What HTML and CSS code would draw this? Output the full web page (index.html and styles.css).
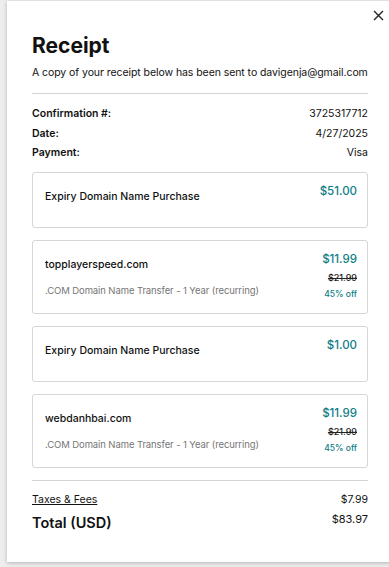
FILE: index.html
```html
<html lang="en">
<head>
  <meta charset="UTF-8" />
  <meta name="viewport" content="width=device-width, initial-scale=1.0"/>
  <title>Receipt</title>
  <link rel="stylesheet" href="styles.css">
</head>
<body>
  <div class="modal">
    <button type="button" class="close-btn" aria-label="Close">
      <svg width="11" height="11" viewBox="0 0 11 11"><path d="M1 1L10 10M10 1L1 10" stroke="#222" stroke-width="1.4" fill="none"/></svg>
    </button>

    <h1 class="title">Receipt</h1>
    <p class="subtitle">A copy of your receipt below has been sent to davigenja@gmail.com</p>

    <div class="divider"></div>

    <div class="info">
      <div class="info-row"><span class="info-label">Confirmation #:</span><span>3725317712</span></div>
      <div class="info-row"><span class="info-label">Date:</span><span>4/27/2025</span></div>
      <div class="info-row"><span class="info-label">Payment:</span><span>Visa</span></div>
    </div>

    <!-- line items -->
    <div class="item short">
      <div class="item-left">
        <div class="item-name">Expiry Domain Name Purchase</div>
      </div>
      <div class="item-right">
        <div class="price">$51.00</div>
      </div>
    </div>

    <div class="item">
      <div class="item-left">
        <div class="item-name">topplayerspeed.com</div>
        <div class="item-desc">.COM Domain Name Transfer - 1 Year (recurring)</div>
      </div>
      <div class="item-right">
        <div class="price">$11.99</div>
        <div class="old-price">$21.99</div>
        <div class="discount">45% off</div>
      </div>
    </div>

    <div class="item short">
      <div class="item-left">
        <div class="item-name">Expiry Domain Name Purchase</div>
      </div>
      <div class="item-right">
        <div class="price">$1.00</div>
      </div>
    </div>

    <div class="item">
      <div class="item-left">
        <div class="item-name">webdanhbai.com</div>
        <div class="item-desc">.COM Domain Name Transfer - 1 Year (recurring)</div>
      </div>
      <div class="item-right">
        <div class="price">$11.99</div>
        <div class="old-price">$21.99</div>
        <div class="discount">45% off</div>
      </div>
    </div>

    <div class="divider bottom"></div>

    <div class="summary-row">
      <a href="#" class="taxes-link">Taxes &amp; Fees</a>
      <span>$7.99</span>
    </div>
    <div class="summary-row total">
      <span class="total-label">Total (USD)</span>
      <span class="total-value">$83.97</span>
    </div>
  </div>
</body>
</html>
```

FILE: styles.css
```css
html, body {
  height: 100%;
}

body {
  font-family: 'Inter', 'Roboto', sans-serif;
  margin: 0;
  padding: 0;
  background-color: #eeeeee;
  color: #111;
  overflow: hidden;
}

.modal {
  position: relative;
  margin: 1px 0 0 7px;
  width: 386px;
  height: 561px;
  box-sizing: border-box;
  padding: 31px 25px 0 25px;
  background-color: #fff;
  box-shadow: 0 1px 4px rgba(0, 0, 0, 0.25);
}

.close-btn {
  position: absolute;
  top: 9px;
  right: 9px;
  padding: 0;
  border: none;
  background: none;
  cursor: pointer;
}

.title {
  margin: 0;
  font-size: 21px;
  line-height: 28px;
  font-weight: 700;
}

.subtitle {
  margin: 6px 0 0;
  font-size: 10.5px;
  line-height: 14px;
  letter-spacing: -0.07px;
  white-space: nowrap;
}

.divider {
  height: 1px;
  background-color: #d4d4d4;
  margin: 13px 0 10px;
}

.info-row {
  display: flex;
  justify-content: space-between;
  font-size: 10.5px;
  line-height: 19.5px;
}

.info-label {
  font-weight: 600;
}

.info {
  margin-bottom: 9px;
}

.item {
  display: flex;
  justify-content: space-between;
  border: 1px solid #d6d6d6;
  border-radius: 3px;
  padding: 10px 10px 12px 12px;
  margin-bottom: 12px;
}

.item.short {
  min-height: 56px;
  box-sizing: border-box;
}

.item-name {
  margin-top: 6px;
  font-size: 10.5px;
  line-height: 16px;
  font-weight: 500;
}

.item-desc {
  margin-top: 10px;
  font-size: 9.5px;
  line-height: 16px;
  letter-spacing: -0.1px;
  color: #767676;
}

.item-right {
  text-align: right;
}

.price {
  font-size: 11.5px;
  line-height: 16px;
  font-weight: 500;
  color: #0e7e86;
}

.old-price {
  margin-top: 3px;
  font-size: 9px;
  line-height: 16px;
  font-weight: 500;
  text-decoration: line-through;
  color: #222;
}

.discount {
  margin-top: 1px;
  font-size: 8.5px;
  line-height: 14px;
  font-weight: 500;
  color: #0e7e86;
}

.divider.bottom {
  margin: 0 0 10px;
}

.summary-row {
  display: flex;
  justify-content: space-between;
  font-size: 10.5px;
  line-height: 18px;
}

.taxes-link {
  color: #111;
}

.summary-row.total {
  align-items: flex-start;
  margin-top: 2px;
}

.total-label {
  font-size: 14.5px;
  line-height: 24px;
  font-weight: 600;
}

.total-value {
  font-size: 11px;
  line-height: 16px;
}
```
